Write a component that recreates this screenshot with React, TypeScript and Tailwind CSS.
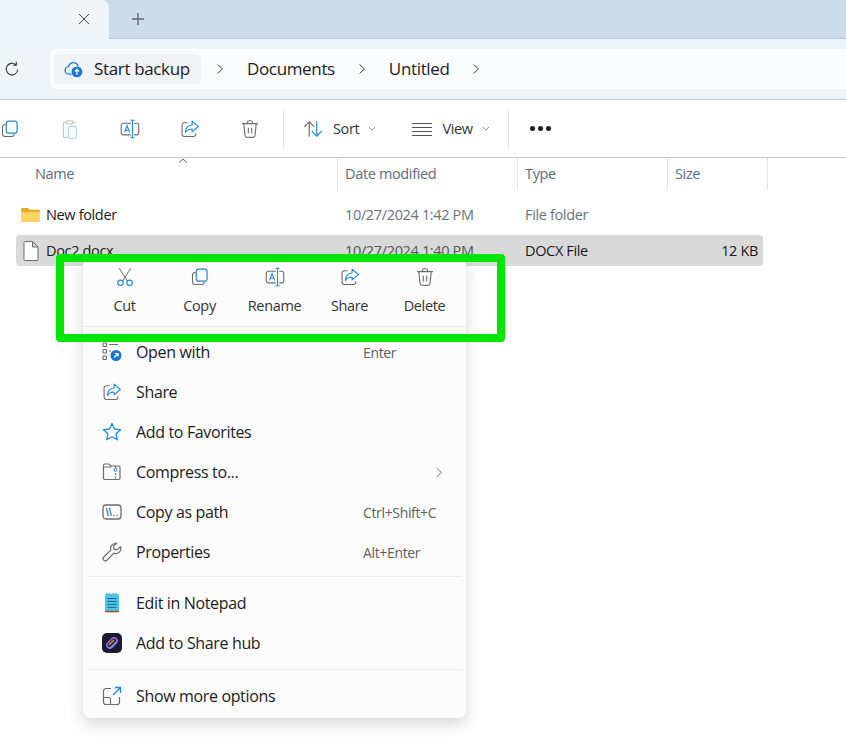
import React from 'react';

const BLUE = '#1e88d8';
const GRAY = '#6b6b6b';

type IconProps = { className?: string };

function Copy({ className }: IconProps) {
  return (
    <svg viewBox="0 0 24 24" fill="none" className={className}>
      <path d="M7 6.5H6a3 3 0 0 0-3 3V18a3 3 0 0 0 3 3h8a3 3 0 0 0 3-3" stroke={GRAY} strokeWidth="1.3" />
      <rect x="7.5" y="2.5" width="13" height="14.5" rx="3" stroke={BLUE} strokeWidth="1.4" />
    </svg>
  );
}

function Paste({ className }: IconProps) {
  return (
    <svg viewBox="0 0 24 24" fill="none" className={className}>
      <path d="M8 4H6a2 2 0 0 0-2 2v14a2 2 0 0 0 2 2h3" stroke="#c4c4c4" strokeWidth="1.3" />
      <path d="M15 4h2a2 2 0 0 1 1.8 1.5" stroke="#c4c4c4" strokeWidth="1.3" />
      <rect x="8" y="2" width="7" height="4" rx="1" stroke="#c4c4c4" strokeWidth="1.3" />
      <rect x="10" y="9" width="10" height="14" rx="2" stroke="#a8d2f0" strokeWidth="1.3" />
    </svg>
  );
}

function Rename({ className }: IconProps) {
  return (
    <svg viewBox="0 0 24 24" fill="none" className={className}>
      <path d="M13 5H4a2.5 2.5 0 0 0-2.5 2.500v9A2.500 2.500 0 0 0 4 19h9M17 5h3a2.500 2.500 0 0 1 2.500 2.500v9A2.500 2.500 0 0 1 20 19h-3" stroke={GRAY} strokeWidth="1.300" />
      <path d="M12.500 1.500h5M12.500 22.500h5M15 1.500v21" stroke={BLUE} strokeWidth="1.300" />
      <path d="M5.500 16 8.500 8l3 8M6.600 13.500h3.800" stroke={BLUE} strokeWidth="1.300" />
    </svg>
  );
}

function Share({ className }: IconProps) {
  return (
    <svg viewBox="0 0 24 24" fill="none" className={className}>
      <path d="M9 4.500H5.500a3 3 0 0 0-3 3V18a3 3 0 0 0 3 3H16a3 3 0 0 0 3-3v-1" stroke={GRAY} strokeWidth="1.300" />
      <path d="M14.500 2.500 22 9l-7.500 6.500V12c-3.500 0-6 1-8 4 .2-5 3-8.500 8-8.800z" stroke={BLUE} strokeWidth="1.300" strokeLinejoin="round" />
    </svg>
  );
}

function Trash({ className }: IconProps) {
  return (
    <svg viewBox="0 0 24 24" fill="none" stroke={GRAY} strokeWidth="1.300" className={className}>
      <path d="M2.500 5.500h19M9 5.500V4a2 2 0 0 1 2-2h2a2 2 0 0 1 2 2v1.500" />
      <path d="M4.500 5.500 6 20a2.500 2.500 0 0 0 2.500 2h7a2.500 2.500 0 0 0 2.500-2l1.500-14.500" />
      <path d="M10 10.500v7M14 10.500v7" />
    </svg>
  );
}

function Cut({ className }: IconProps) {
  return (
    <svg viewBox="0 0 24 24" fill="none" className={className}>
      <path d="M5 1.500 15 17M19 1.500 9 17" stroke={GRAY} strokeWidth="1.200" />
      <circle cx="6.500" cy="19" r="3.300" stroke={BLUE} strokeWidth="1.400" />
      <circle cx="17.500" cy="19" r="3.300" stroke={BLUE} strokeWidth="1.400" />
    </svg>
  );
}

function Sort({ className }: IconProps) {
  return (
    <svg viewBox="0 0 24 24" fill="none" strokeWidth="1.400" className={className}>
      <path d="M7.500 21V3.500M1.500 9.500l6-6 6 6" stroke={GRAY} />
      <path d="M16.500 3v17.500M10.500 14.500l6 6 6-6" stroke={BLUE} />
    </svg>
  );
}

function OpenWith({ className }: IconProps) {
  return (
    <svg viewBox="0 0 20 20" fill="none" className={className}>
      <rect x="1" y="1" width="3.500" height="3.500" rx=".7" stroke={GRAY} strokeWidth="1.100" />
      <rect x="1" y="7.500" width="3.500" height="3.500" rx=".7" stroke={GRAY} strokeWidth="1.100" />
      <rect x="1" y="14" width="3.500" height="3.500" rx=".7" stroke={GRAY} strokeWidth="1.100" />
      <path d="M7 2.500h9M7 9h2" stroke={GRAY} strokeWidth="1.100" />
      <circle cx="14" cy="13.500" r="5.500" fill="#1478d0" />
      <path d="M12 15.500l4-4M13 11.500h3v3" stroke="#fff" strokeWidth="1.200" />
    </svg>
  );
}

function Star({ className }: IconProps) {
  return (
    <svg viewBox="0 0 20 20" fill="none" className={className}>
      <path d="M10 1.500l2.500 5.500 6 .7-4.400 4.100 1.200 6L10 14.800 4.700 17.800l1.200-6L1.500 7.700l6-.7z" stroke={BLUE} strokeWidth="1.300" strokeLinejoin="round" />
    </svg>
  );
}

function Compress({ className }: IconProps) {
  return (
    <svg viewBox="0 0 20 20" fill="none" className={className}>
      <path d="M1.500 5V3.500a1.500 1.500 0 0 1 1.500-1.500h4l2 2h7.500A1.500 1.500 0 0 1 18 5.500v10.500a1.500 1.500 0 0 1-1.500 1.500H3A1.500 1.500 0 0 1 1.500 16V5h8" stroke={GRAY} strokeWidth="1.200" />
      <path d="M13.500 4v13.500" stroke={BLUE} strokeWidth="1.200" strokeDasharray="2 1.500" />
      <rect x="12.300" y="6" width="2.400" height="3" rx=".8" fill="#fff" stroke={BLUE} strokeWidth="1" />
    </svg>
  );
}

function CopyPath({ className }: IconProps) {
  return (
    <svg viewBox="0 0 20 20" fill="none" className={className}>
      <rect x="1" y="3" width="18" height="14" rx="3" stroke={GRAY} strokeWidth="1.300" />
      <path d="M4.500 6l1.800 8M7.500 6l1.800 8" stroke="#3f6f93" strokeWidth="1.200" />
      <path d="M11.500 13.500h1M14.500 13.500h1" stroke="#3f6f93" strokeWidth="1.400" />
    </svg>
  );
}

function Wrench({ className }: IconProps) {
  return (
    <svg viewBox="0 0 20 20" fill="none" className={className}>
      <path d="M13.500 1.500a5 5 0 0 0-4.700 6.600L1.800 15a2.200 2.200 0 0 0 3.200 3.200l6.900-7a5 5 0 0 0 6.500-6.600l-3.400 3.300-2.900-.7-.7-2.800 3.400-3.100a5 5 0 0 0-.8-.2z" stroke={GRAY} strokeWidth="1.200" strokeLinejoin="round" />
    </svg>
  );
}

function Notepad({ className }: IconProps) {
  return (
    <svg viewBox="0 0 20 20" className={className}>
      <rect x="3" y="1" width="14" height="18" rx="1.500" fill="#4cc2e4" />
      <rect x="3" y="17.800" width="14" height="1.500" fill="#9a5a1e" />
      <path d="M5 1v-1M8 1v-1M11 1v-1M14 1v-1" stroke="#1a7fa8" strokeWidth="1" />
      <path d="M5.500 5.500h9M5.500 8.500h9M5.500 11.500h9M5.500 14.500h9" stroke="#0f6c94" strokeWidth="1.100" />
    </svg>
  );
}

function ShareHub({ className }: IconProps) {
  return (
    <svg viewBox="0 0 20 20" fill="none" className={className}>
      <rect width="20" height="20" rx="5" fill="#1a1c2e" />
      <rect x="4" y="7" width="12" height="6" rx="3" transform="rotate(-45 10 10)" stroke="#a26bf0" strokeWidth="1.500" />
      <path d="M7 12l5-5" stroke="#f08a3c" strokeWidth="1.500" />
      <path d="M6 14.500l2 .5 6-6" stroke="#4fa8f0" strokeWidth="1.200" />
    </svg>
  );
}

function ShowMore({ className }: IconProps) {
  return (
    <svg viewBox="0 0 20 20" fill="none" className={className}>
      <path d="M9 2.500H4A2.500 2.500 0 0 0 1.500 5v11A2.500 2.500 0 0 0 4 18.500h11a2.500 2.500 0 0 0 2.500-2.500v-5" stroke={GRAY} strokeWidth="1.200" />
      <path d="M1.500 11.500h5a2 2 0 0 1 2 2v5" stroke={GRAY} strokeWidth="1.200" />
      <path d="M11 9l7.500-7.500M13 1.500h5.500V7" stroke={BLUE} strokeWidth="1.300" />
    </svg>
  );
}

function Cloud({ className }: IconProps) {
  return (
    <svg viewBox="0 0 24 24" fill="none" className={className}>
      <path d="M9 18H6a4.500 4.500 0 0 1-.5-9 6 6 0 0 1 11.500-.5" stroke="#1478d0" strokeWidth="1.500" />
      <circle cx="15.500" cy="15.500" r="6.500" fill="#1478d0" />
      <path d="M15.500 19v-6.500M13 15l2.500-2.500L18 15" stroke="#fff" strokeWidth="1.500" />
    </svg>
  );
}

function Chevron({ className }: IconProps) {
  return (
    <svg viewBox="0 0 10 14" fill="none" stroke="currentColor" strokeWidth="1.200" className={className}>
      <path d="M2 1.500 8 7l-6 5.500" />
    </svg>
  );
}

function Caret({ className }: IconProps) {
  return (
    <svg viewBox="0 0 10 6" fill="none" stroke="#777777" strokeWidth="1" className={className}>
      <path d="M1 1l4 4 4-4" />
    </svg>
  );
}

const toolbarIcons = [Copy, Paste, Rename, Share, Trash];
const quickActions = [
  { label: 'Cut', Icon: Cut },
  { label: 'Copy', Icon: Copy },
  { label: 'Rename', Icon: Rename },
  { label: 'Share', Icon: Share },
  { label: 'Delete', Icon: Trash },
];

function MenuRow({ Icon, label, hint, arrow }: { Icon: React.FC<IconProps>; label: string; hint?: string; arrow?: boolean }) {
  return (
    <div className="flex h-10 items-center pl-[19px] pr-[20px]">
      <Icon className="h-5 w-5 shrink-0" />
      <span className="ml-[14px] flex-1 text-[#1b1b1b]">{label}</span>
      {hint && <span className="w-[83px] text-[14px] text-[#5f5f5f]">{hint}</span>}
      {arrow && <Chevron className="mr-[3px] h-[11px] w-2 text-[#6d6d6d]" />}
    </div>
  );
}

function App() {
  return (
    <div className="relative h-[752px] w-[846px] overflow-hidden bg-white font-['Open_Sans','Noto_Sans',sans-serif] text-[16px] tracking-[-0.35px]">
      {/* tab strip */}
      <div className="flex h-[39px] items-center border-b border-[#b9c9da] bg-[#ccdcea]">
        <div className="flex h-[39px] w-[109px] items-center justify-end rounded-tr-lg bg-[#eff4f9] pr-[19px]">
          <svg viewBox="0 0 12 12" stroke="#444444" strokeWidth="1" className="h-3 w-3">
            <path d="M1 1l10 10M11 1 1 11" />
          </svg>
        </div>
        <svg viewBox="0 0 12 12" stroke="#5a6570" strokeWidth="1.300" className="ml-[23px] h-3 w-3">
          <path d="M6 0v12M0 6h12" />
        </svg>
      </div>

      {/* address bar */}
      <div className="flex h-[61px] items-center border-b border-[#bfccd9] bg-[#eff4f9]">
        <svg viewBox="0 0 16 16" fill="none" stroke="#333333" strokeWidth="1.100" className="ml-[4px] h-4 w-4 shrink-0">
          <path d="M13.800 8.500a5.800 5.800 0 1 1-2-4.800M12.300 .8v3.400H9" />
        </svg>
        <div className="ml-[30px] flex h-10 flex-1 items-center bg-[#fbfcfe] pl-1 rounded-l-md text-[17px] text-[#1b1b1b]">
          <div className="flex h-[30px] w-[147px] items-center rounded-md bg-[#f0f2f5] pl-[10px]">
            <Cloud className="h-5 w-5" />
            <span className="ml-[10px]">Start backup</span>
          </div>
          <Chevron className="ml-[15px] h-3 w-2 text-[#333333]" />
          <span className="ml-[23px]">Documents</span>
          <Chevron className="ml-[23px] h-3 w-2 text-[#333333]" />
          <span className="ml-[23px]">Untitled</span>
          <Chevron className="ml-[22px] h-3 w-2 text-[#333333]" />
        </div>
      </div>

      {/* command bar */}
      <div className="flex h-[58px] items-center border-b border-[#c3ccd5] text-[14.500px] text-[#333333]">
        <div className="-ml-[20px] flex shrink-0">
          {toolbarIcons.map((Icon, i) => (
            <div key={i} className="flex w-[60px] justify-center">
              <Icon className="h-5 w-5" />
            </div>
          ))}
        </div>
        <div className="ml-[3px] h-10 w-px bg-[#e4e6e8]" />
        <Sort className="ml-[19px] h-5 w-5" />
        <span className="ml-[10px]">Sort</span>
        <Caret className="ml-[9px] h-[5px] w-2" />
        <svg viewBox="0 0 20 14" stroke="#555555" strokeWidth="1" className="ml-[36px] h-[14px] w-5">
          <path d="M0 1.500h20M0 5.500h20M0 9.500h20M0 13.500h20" />
        </svg>
        <span className="ml-[10px]">View</span>
        <Caret className="ml-[9px] h-[5px] w-2" />
        <div className="ml-[18px] h-10 w-px bg-[#e4e6e8]" />
        <div className="ml-[21px] flex gap-[3px]">
          <span className="h-[5px] w-[5px] rounded-full bg-[#1b1b1b]" />
          <span className="h-[5px] w-[5px] rounded-full bg-[#1b1b1b]" />
          <span className="h-[5px] w-[5px] rounded-full bg-[#1b1b1b]" />
        </div>
      </div>

      {/* column headers */}
      <div className="relative flex h-[32px] items-center text-[14.500px] text-[#5c6b7d]">
        <svg viewBox="0 0 10 5" fill="none" stroke="#666666" strokeWidth="1" className="absolute left-[178px] top-0 h-[5px] w-[10px]">
          <path d="M1 4.500 5 1l4 3.500" />
        </svg>
        <div className="flex h-full w-[338px] items-center border-r border-[#e3e5e7] pl-[35px]">Name</div>
        <div className="flex h-full w-[180px] items-center border-r border-[#e3e5e7] pl-[7px]">Date modified</div>
        <div className="flex h-full w-[150px] items-center border-r border-[#e3e5e7] pl-[7px]">Type</div>
        <div className="flex h-full w-[100px] items-center border-r border-[#e3e5e7] pl-[7px]">Size</div>
      </div>

      {/* file rows */}
      <div className="mt-[9px] flex h-[31px] w-[747px] ml-[16px] items-center text-[14.500px]">
        <svg viewBox="0 0 20 16" className="ml-[5px] h-[15px] w-[19px]">
          <path d="M0 2a1 1 0 0 1 1-1h6l2 2h10a1 1 0 0 1 1 1v2H0z" fill="#e8a91f" />
          <path d="M0 5h20v10a1 1 0 0 1-1 1H1a1 1 0 0 1-1-1z" fill="#fcd462" />
        </svg>
        <span className="ml-[6px] w-[299px] text-[#1b1b1b]">New folder</span>
        <span className="w-[180px] text-[#6d7278]">10/27/2024 1:42 PM</span>
        <span className="text-[#6d7278]">File folder</span>
      </div>
      <div className="mt-[5px] ml-[16px] flex h-[31px] w-[747px] items-center rounded-sm bg-[#d9d9d9] text-[14.500px] text-[#1b1b1b]">
        <svg viewBox="0 0 16 20" fill="#ffffff" stroke="#6b6b6b" strokeWidth="1" className="ml-[7px] h-5 w-4">
          <path d="M1 1.500A1 1 0 0 1 2 .500h7.500L15 6v12.500a1 1 0 0 1-1 1H2a1 1 0 0 1-1-1zM9.500 .500V6H15" />
        </svg>
        <span className="ml-[7px] w-[299px]">Doc2.docx</span>
        <span className="w-[180px] text-[#555555]">10/27/2024 1:40 PM</span>
        <span className="w-[142px]">DOCX File</span>
        <span className="w-[91px] text-right">12 KB</span>
      </div>

      {/* context menu */}
      <div className="absolute left-[83px] top-[258px] w-[383px] rounded-lg bg-[#fcfcfc] shadow-[0_6px_16px_rgba(0,0,0,0.16)]">
        <div className="flex h-[69px] items-start border-b border-[#ececec] pl-[4px] pt-[9px]">
          {quickActions.map(({ label, Icon }) => (
            <div key={label} className="flex w-[75px] flex-col items-center">
              <Icon className="h-5 w-5" />
              <span className="mt-[8px] text-[14.500px] text-[#333333]">{label}</span>
            </div>
          ))}
        </div>
        <div className="pb-[4px] pt-[5px]">
          <MenuRow Icon={OpenWith} label="Open with" hint="Enter" />
          <MenuRow Icon={Share} label="Share" />
          <MenuRow Icon={Star} label="Add to Favorites" />
          <MenuRow Icon={Compress} label="Compress to..." arrow />
          <MenuRow Icon={CopyPath} label="Copy as path" hint="Ctrl+Shift+C" />
          <MenuRow Icon={Wrench} label="Properties" hint="Alt+Enter" />
        </div>
        <div className="mx-[4px] border-t border-[#ececec]" />
        <div className="py-[6px]">
          <MenuRow Icon={Notepad} label="Edit in Notepad" />
          <MenuRow Icon={ShareHub} label="Add to Share hub" />
        </div>
        <div className="mx-[4px] border-t border-[#ececec]" />
        <div className="pb-[2px] pt-[6px]">
          <MenuRow Icon={ShowMore} label="Show more options" />
        </div>
      </div>

      {/* green annotation box */}
      <div className="absolute left-[56px] top-[254px] h-[88px] w-[449px] rounded-[4px] border-[8px] border-[#00e600]" />
    </div>
  );
}

export default React.memo(App);
